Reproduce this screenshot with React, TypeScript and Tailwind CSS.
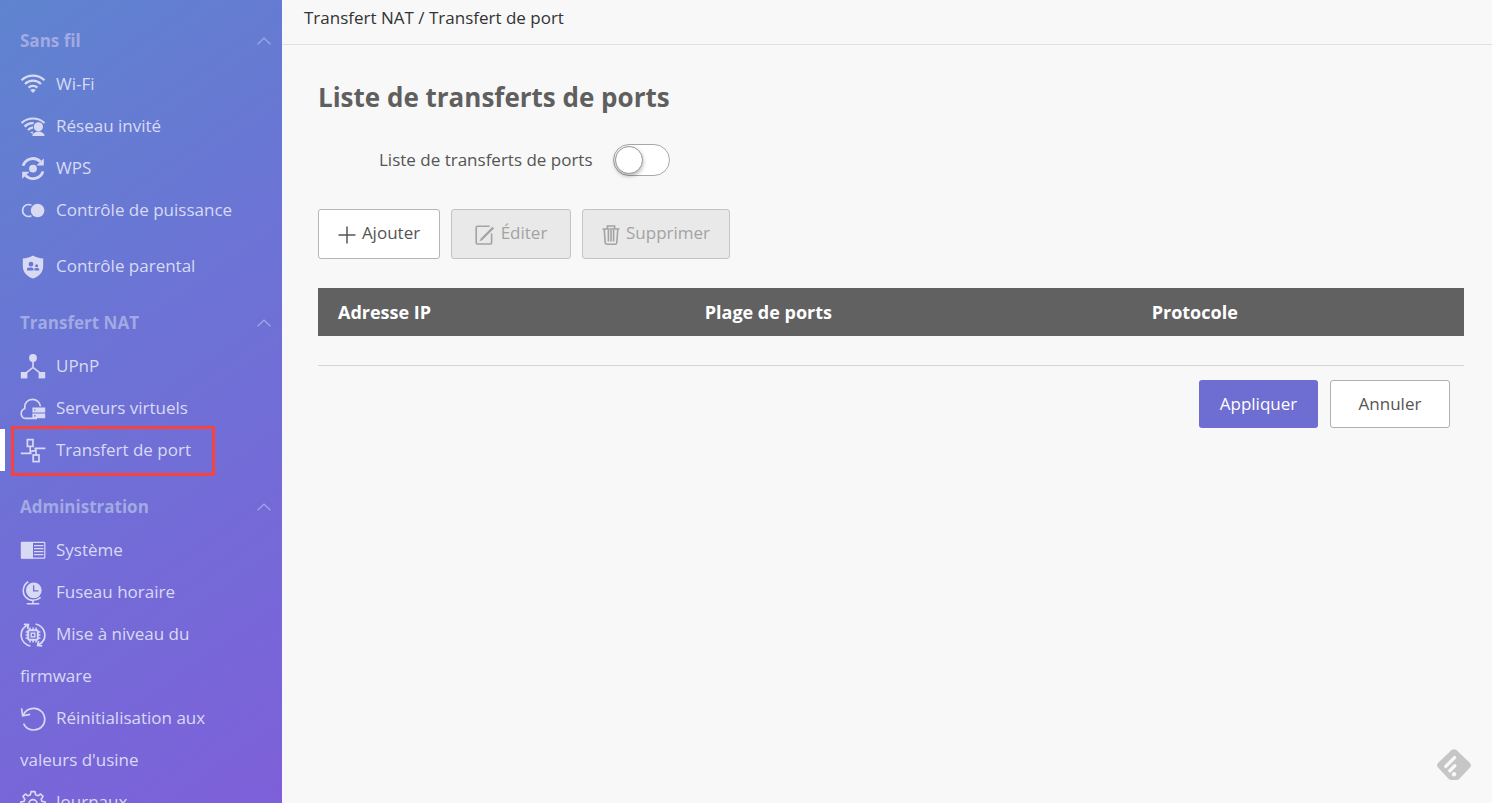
import React, { useState } from 'react';
import clsx from 'clsx';

interface NavItem {
  label: string;
  icon: React.ReactNode;
  active?: boolean;
}

interface NavGroup {
  title?: string;
  items: NavItem[];
}

function NavIcon({ children }: { children: React.ReactNode }) {
  return (
    <svg
      viewBox="0 0 26 26"
      className="mr-[10px] inline-block h-[26px] w-[26px] align-middle"
      fill="none"
      stroke="currentColor"
      strokeWidth="2"
      aria-hidden="true"
    >
      {children}
    </svg>
  );
}

const WifiIcon = (
  <NavIcon>
    <path d="M1.5 8.2C8 2 18 2 24.5 8.2M5 12C9.5 7.6 16.5 7.6 21 12M8.6 15.6C11 13.2 15 13.2 17.4 15.6" strokeWidth="2.2" />
    <path d="M10.2 18C12 16.6 14 16.6 15.8 18L13 21Z" fill="currentColor" stroke="none" />
  </NavIcon>
);

const GuestIcon = (
  <NavIcon>
    <path d="M1.5 9C8 3 18 3 24.5 9M4.6 12.6C7.4 9.8 10.4 8.9 13.6 9.2M8 16C9.6 14.4 11.2 13.6 13 13.4" strokeWidth="2.2" />
    <path d="M10.2 18.2L12.8 17.6V20.2Z" fill="currentColor" stroke="none" />
    <circle cx="18.4" cy="12.8" r="4.6" fill="currentColor" stroke="none" />
    <path d="M12.4 22C12.6 19.2 15 18.6 16.6 17.8H20.4C22 18.6 24.4 19.2 24.6 22Z" fill="currentColor" stroke="none" />
  </NavIcon>
);

const WpsIcon = (
  <NavIcon>
    <circle cx="13" cy="12.6" r="3.9" fill="currentColor" stroke="none" />
    <path d="M3 9.8C5.6 1.8 15.4 0.4 20.4 5.8M23 15.4C20.4 23.4 10.6 24.8 5.6 19.4" strokeWidth="2.8" />
    <path d="M23.8 2.4V9.4H16.4ZM2.2 22.8V15.8H9.6Z" fill="currentColor" stroke="none" />
  </NavIcon>
);

const PowerIcon = (
  <NavIcon>
    <path d="M11.4 7.2A6 6 0 1 0 11.4 17.8" strokeWidth="1.6" />
    <circle cx="17.6" cy="12.5" r="6.8" fill="currentColor" stroke="none" />
  </NavIcon>
);

const ParentalIcon = (
  <NavIcon>
    <path
      fillRule="evenodd"
      fill="currentColor"
      stroke="none"
      d="M13 1.6C16 3.4 19.4 4.4 23.2 4.6V12C23.2 18.4 19.2 22.2 13 24.6C6.8 22.2 2.8 18.4 2.8 12V4.6C6.6 4.4 10 3.4 13 1.6ZM11 7.8A2.4 2.4 0 1 0 11 12.6A2.4 2.4 0 1 0 11 7.8ZM7 16.4H13.4V14.4C12.4 13.2 8 13.2 7 14.4ZM16.6 10.2A1.5 1.5 0 1 0 16.6 13.2A1.5 1.5 0 1 0 16.6 10.2ZM14.4 16.4H19.2V14.8C18.2 13.8 15.4 13.8 14.4 14.6Z"
    />
  </NavIcon>
);

const UpnpIcon = (
  <NavIcon>
    <g fill="currentColor" stroke="none">
      <circle cx="13" cy="4" r="3.9" />
      <rect x="0.8" y="18" width="6.6" height="6.4" />
      <rect x="18.6" y="18" width="6.6" height="6.4" />
    </g>
    <path d="M13 7V13.6M5.4 19.4L13 13.4L20.6 19.4" strokeWidth="1.6" />
  </NavIcon>
);

const CloudIcon = (
  <NavIcon>
    <path
      d="M17 22.4H5.6C2.8 22.4 1.2 20 1.2 17.6C1.2 14.8 2.6 13.2 4.8 12.4C4.2 6.8 8 3.4 12.4 3.4C16.6 3.4 20 6.4 20.4 10.4"
      strokeWidth="1.6"
    />
    <path
      fillRule="evenodd"
      fill="currentColor"
      stroke="none"
      d="M12.4 11.6H25.2V16.4H12.4ZM14 13.4V14.6H15.6V13.4ZM12.4 17.4H25.2V22.2H12.4ZM14 19.2V20.4H15.6V19.2Z"
    />
  </NavIcon>
);

const PortIcon = (
  <NavIcon>
    <rect x="7.4" y="1.6" width="5.6" height="6.8" strokeWidth="1.7" />
    <rect x="13.2" y="17" width="5.8" height="6.6" strokeWidth="1.7" />
    <path d="M10.2 8.4V15.4M0.8 15.4H11.6M16 17.2V10.4M14.4 10.4H25.4M11 13.4L16 12.4" strokeWidth="1.6" />
  </NavIcon>
);

const SystemIcon = (
  <NavIcon>
    <rect x="1.4" y="4.4" width="23.4" height="15.8" rx="0.6" strokeWidth="1.2" />
    <path d="M1 4.2H13V20.4H1Z" fill="currentColor" stroke="none" />
    <path d="M14 7.6H23.4M14 10.6H23.4M14 13.6H23.4M14 16.6H23.4" strokeWidth="1.4" />
  </NavIcon>
);

const ClockIcon = (
  <NavIcon>
    <path
      fillRule="evenodd"
      fill="currentColor"
      stroke="none"
      d="M13.8 2.4A7.9 7.9 0 1 0 13.8 18.2A7.9 7.9 0 1 0 13.8 2.4ZM13 5.2H14.3V10.2H18.4V11.5H13Z"
    />
    <path d="M8.2 1.8C2.8 5.2 1.6 12.6 5.8 17.2C9.8 21.4 16.4 21.2 20.6 17.4M13 20.4V23.6M6.8 23.8H19.2" strokeWidth="1.6" />
  </NavIcon>
);

const FirmwareIcon = (
  <NavIcon>
    <path
      d="M7.4 3.2C2.6 5.6 0.6 10.2 1.4 15C2 19.2 5.6 23.2 10.4 24M3.8 2.4L8.4 2.6L7.6 7M18.6 22.8C23.4 20.4 25.4 15.8 24.6 11C24 6.8 20.4 2.8 15.6 2M22.2 23.8L17.6 23.4L18.6 19"
      strokeWidth="1.7"
    />
    <rect x="8.2" y="8.2" width="9.6" height="9.6" rx="1" strokeWidth="2" />
    <rect x="11.2" y="11.2" width="3.6" height="3.6" strokeWidth="1.4" />
    <path
      d="M10 5.6V8M13 5.6V8M16 5.6V8M10 18V20.4M13 18V20.4M16 18V20.4M5.6 10H8M5.6 13H8M5.6 16H8M18 10H20.4M18 13H20.4M18 16H20.4"
      strokeWidth="1.5"
    />
  </NavIcon>
);

const ResetIcon = (
  <NavIcon>
    <path d="M3.2 9.2C5.4 4.6 9.6 2.2 14.4 2.4C20.4 2.8 24.8 7.4 24.8 13.2C24.8 19.4 20 24 13.8 24C9.2 24 5.4 21.6 3.6 17.6" strokeWidth="1.6" />
    <path d="M1.6 2.4L2.6 9.8L10.2 8.4" strokeWidth="1.6" />
  </NavIcon>
);

const GearIcon = (
  <NavIcon>
    <path
      d="M11 1.6H15L15.6 4.8L18 5.8L20.6 4L23 6.4L21.2 9.2L22 11.4L25.2 12V15.4L22 16L21 18.4L22.8 21L20.4 23.4L17.8 21.6L15.4 22.6L14.8 25.6H11.2L10.6 22.6L8.2 21.6L5.6 23.4L3.2 21L5 18.4L4 16L0.8 15.4V12L4 11.4L4.8 9.2L3 6.4L5.4 4L8 5.8L10.4 4.8Z"
      strokeWidth="1.6"
      strokeLinejoin="round"
    />
    <circle cx="13" cy="13.6" r="4" strokeWidth="1.6" />
  </NavIcon>
);

const groups: NavGroup[] = [
  {
    title: 'Sans fil',
    items: [
      { label: 'Wi-Fi', icon: WifiIcon },
      { label: 'Réseau invité', icon: GuestIcon },
      { label: 'WPS', icon: WpsIcon },
      { label: 'Contrôle de puissance', icon: PowerIcon },
    ],
  },
  {
    items: [{ label: 'Contrôle parental', icon: ParentalIcon }],
  },
  {
    title: 'Transfert NAT',
    items: [
      { label: 'UPnP', icon: UpnpIcon },
      { label: 'Serveurs virtuels', icon: CloudIcon },
      { label: 'Transfert de port', icon: PortIcon, active: true },
    ],
  },
  {
    title: 'Administration',
    items: [
      { label: 'Système', icon: SystemIcon },
      { label: 'Fuseau horaire', icon: ClockIcon },
      { label: 'Mise à niveau du firmware', icon: FirmwareIcon },
      { label: "Réinitialisation aux valeurs d'usine", icon: ResetIcon },
      { label: 'Journaux', icon: GearIcon },
    ],
  },
];

function Sidebar() {
  return (
    <nav className="flex w-[282px] shrink-0 flex-col gap-[14px] overflow-hidden bg-[linear-gradient(145deg,#5f84cf_0%,#6c73d5_42%,#7e60da_100%)] pt-[19px] text-[#d8daf4]">
      {groups.map((group) => (
        <div key={group.items[0].label} className="shrink-0">
          {group.title && (
            <button className="flex h-[44px] w-full items-center justify-between pr-[11px] pl-5 font-bold text-[#a1aae3]">
              {group.title}
              <svg viewBox="0 0 14 8" className="h-2 w-[14px]" fill="none" stroke="currentColor" strokeWidth="1.2" aria-hidden="true">
                <path d="M0.6 7.2L7 1L13.4 7.2" />
              </svg>
            </button>
          )}
          {group.items.map((item) => (
            <a
              key={item.label}
              href="#"
              className={clsx(
                'relative block border-l-[5px] pr-8 pl-[15px] leading-[42px]',
                item.active ? 'border-white' : 'border-transparent'
              )}
            >
              {item.icon}
              {item.label}
              {item.active && (
                <span className="absolute -top-[3px] left-[6px] h-[50px] w-[204px] border-[3px] border-[#f8423f]" />
              )}
            </a>
          ))}
        </div>
      ))}
    </nav>
  );
}

function Toggle() {
  const [on, setOn] = useState(false);
  return (
    <div className="flex items-center gap-5 pl-[61px]">
      <label htmlFor="port-forwarding">Liste de transferts de ports</label>
      <span className="relative flex">
        <input
          id="port-forwarding"
          type="checkbox"
          checked={on}
          onChange={() => setOn(!on)}
          className="peer h-8 w-[57px] cursor-pointer appearance-none rounded-full border border-[#a8a8a8] bg-white checked:bg-[#6e6dd1]"
        />
        <span className="pointer-events-none absolute top-[2px] left-[2px] h-7 w-7 rounded-full border border-[#999] bg-white shadow-[0_2px_4px_rgba(0,0,0,0.3)] peer-checked:left-[27px]" />
      </span>
    </div>
  );
}

function Toolbar() {
  const disabled = 'border-[#c4c4c4] bg-[#e9e9e9] text-[#a3a3a3]';
  return (
    <div className="flex gap-[11px]">
      <button className="flex h-[50px] w-[122px] items-center justify-center gap-[6px] rounded-[3px] border border-[#b5b5b5] bg-white pb-[2px]">
        <svg viewBox="0 0 18 18" className="mt-1 h-[18px] w-[18px]" stroke="currentColor" strokeWidth="1.5" aria-hidden="true">
          <path d="M9 0.5V17.5M0.5 9H17.5" />
        </svg>
        Ajouter
      </button>
      <button disabled className={clsx('flex h-[50px] w-[120px] items-center justify-center gap-[6px] rounded-[3px] border pb-[2px]', disabled)}>
        <svg viewBox="0 0 20 20" className="mt-1 h-5 w-5" fill="none" stroke="currentColor" strokeWidth="1.6" aria-hidden="true">
          <path d="M14.6 1.2H2.4Q1.2 1.2 1.2 2.4V17.8Q1.2 19 2.4 19H15.4Q16.6 19 16.6 17.8V8.4" />
          <path d="M17.4 1.8L19 3.4L7.4 15L4.4 16.4L5.8 13.4Z" fill="currentColor" stroke="none" />
        </svg>
        Éditer
      </button>
      <button disabled className={clsx('flex h-[50px] w-[148px] items-center justify-center gap-[6px] rounded-[3px] border pb-[2px]', disabled)}>
        <svg viewBox="0 0 18 20" className="mt-1 h-5 w-[18px]" fill="none" stroke="currentColor" strokeWidth="1.6" aria-hidden="true">
          <path d="M0.6 4H17.4M5.4 4V1H12.6V4M2.2 4L3.2 17.6Q3.4 19.2 5 19.2H13Q14.6 19.2 14.8 17.6L15.8 4M6.4 5V16.6M9 5V16.6M11.6 5V16.6" />
        </svg>
        Supprimer
      </button>
    </div>
  );
}

function FeedlyMark() {
  return (
    <svg viewBox="0 0 34 32" className="fixed right-[21px] bottom-[22px] h-8 w-[34px]" aria-hidden="true">
      <path
        d="M14.4 1.2Q17 -0.8 19.6 1.2L32.8 13.8Q35 16.2 32.8 18.8L22.4 29.8Q21.2 31 19.4 31H14.6Q12.8 31 11.6 29.8L1.2 18.8Q-1 16.2 1.2 13.8Z"
        fill="#c6c6c6"
      />
      <path d="M8.8 17.4L17.6 8.6M12.8 21.8L17.8 16.8" stroke="#f8f8f8" strokeWidth="3.4" strokeLinecap="round" />
      <circle cx="17" cy="25.2" r="2.2" fill="#f8f8f8" />
    </svg>
  );
}

export default function App() {
  return (
    <div className="flex h-screen overflow-hidden bg-[#f8f8f8] font-['Open_Sans','Noto_Sans',sans-serif] text-[17px] text-[#555]">
      <Sidebar />
      <main className="min-w-0 flex-1">
        <header className="h-[45px] border-b border-[#e0e0e0] px-[22px] pt-[4px] leading-7 text-[#333]">
          Transfert NAT / Transfert de port
        </header>
        <div className="pt-8 pr-7 pl-9">
          <h1 className="mb-[27px] text-[26px] leading-[40px] font-bold text-[#5f5f5f]">Liste de transferts de ports</h1>
          <Toggle />
          <div className="mt-[33px] mb-[29px]">
            <Toolbar />
          </div>
          <table className="w-full table-fixed text-left text-[18px]">
            <thead className="bg-[#616161] text-white">
              <tr className="h-12">
                <th className="w-[32%] pl-5 font-bold">Adresse IP</th>
                <th className="w-[39%] pl-5 font-bold">Plage de ports</th>
                <th className="pl-5 font-bold">Protocole</th>
              </tr>
            </thead>
            <tbody />
          </table>
          <div className="mt-[29px] flex justify-end gap-3 border-t border-[#d4d4d4] pt-[14px] pr-[14px]">
            <button className="h-12 w-[119px] rounded-[3px] bg-[#6e6dd1] text-white">Appliquer</button>
            <button className="h-12 w-[120px] rounded-[3px] border border-[#b0b0b0] bg-white">Annuler</button>
          </div>
        </div>
      </main>
      <FeedlyMark />
    </div>
  );
}
